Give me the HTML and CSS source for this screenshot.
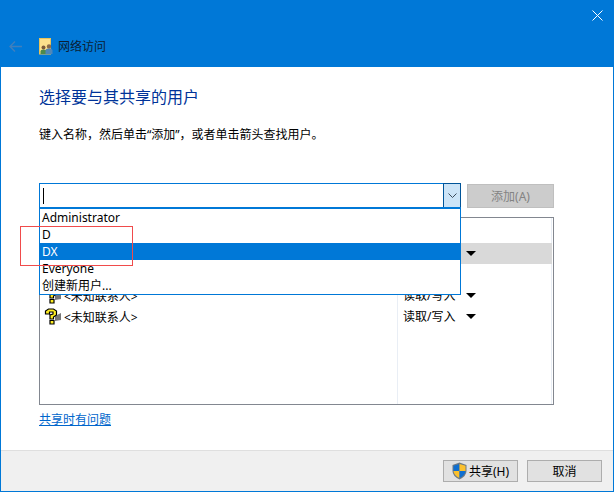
FILE: index.html
```html
<!DOCTYPE html>
<html lang="zh-CN">
<head>
<meta charset="utf-8">
<title>网络访问</title>
<link rel="stylesheet" href="styles.css">
</head>
<body>
<div class="window">
  <header class="titlebar">
    <div class="close-row">
      <svg class="close" width="11" height="11" viewBox="0 0 11 11"><path d="M.5.5l10 10M10.5.5l-10 10" stroke="#fff" stroke-width="1" fill="none"/></svg>
    </div>
    <div class="nav-row">
      <svg class="back" width="13" height="11" viewBox="0 0 13 11"><path d="M6 .5L1 5.500l5 5M1 5.500h12" stroke="#3f7fbd" stroke-width="1.4" fill="none"/></svg>
      <svg class="app-icon" width="14" height="17" viewBox="0 0 14 17">
        <rect x=".5" y=".5" width="11" height="15.500" fill="#fbe08c" stroke="#e8c35a"/>
        <circle cx="4.500" cy="9.500" r="2" fill="#7a5a3a"/>
        <path d="M1.500 16v-2.500q0-2 3-2t3 2V16z" fill="#4d8a4a"/>
        <circle cx="10" cy="8.500" r="2.200" fill="#8a6a4a"/>
        <path d="M6.500 16v-3.500q0-2 3.500-2t3.500 2V16z" fill="#4f86b8"/>
      </svg>
      <span class="app-title">网络访问</span>
    </div>
  </header>

  <main class="content">
    <h1 class="heading">选择要与其共享的用户</h1>
    <p class="desc">键入名称，然后单击“添加”，或者单击箭头查找用户。</p>

    <div class="add-row">
      <div class="combo">
        <div class="combo-input"><span class="caret"></span></div>
        <div class="combo-btn">
          <svg width="9" height="5" viewBox="0 0 9 5"><path d="M.5.5l4 4 4-4" stroke="#3c4c5c" fill="none"/></svg>
        </div>
        <ul class="dropdown">
          <li>Administrator</li>
          <li>D</li>
          <li class="selected">DX</li>
          <li>Everyone</li>
          <li>创建新用户...</li>
        </ul>
      </div>
      <button class="btn btn-add" disabled>添加(A)</button>
    </div>

    <div class="list">
      <div class="row"></div>
      <div class="row row-active">
        <span class="perm"><span class="arrow"></span></span>
      </div>
      <div class="row"></div>
      <div class="row">
        <svg class="q-icon" width="18" height="17" viewBox="0 0 18 17"><path d="M11 8l6-3v7l-6 1z" fill="#777"/><path d="M1.500 6V3l3-2h5l3 2v4l-3 2v2H6V7l3-1V4H5.500v2zM6 12.500h4v3.500H6z" fill="#ffee22" stroke="#000" stroke-width="1.200"/></svg>
        <span class="name">&lt;未知联系人&gt;</span>
        <span class="perm">读取/写入<span class="arrow"></span></span>
      </div>
      <div class="row">
        <svg class="q-icon" width="18" height="17" viewBox="0 0 18 17"><path d="M11 8l6-3v7l-6 1z" fill="#777"/><path d="M1.500 6V3l3-2h5l3 2v4l-3 2v2H6V7l3-1V4H5.500v2zM6 12.500h4v3.500H6z" fill="#ffee22" stroke="#000" stroke-width="1.200"/></svg>
        <span class="name">&lt;未知联系人&gt;</span>
        <span class="perm">读取/写入<span class="arrow"></span></span>
      </div>
    </div>

    <a class="help" href="#">共享时有问题</a>
  </main>

  <footer class="footer">
    <button class="btn btn-share">
      <svg width="15" height="18" viewBox="0 0 15 18">
        <path d="M7.500.5L14.500 3v6q0 5-7 8.500Q.5 14 .5 9V3z" fill="#6f7a84"/>
        <path d="M7.500 2L7.500 9H1.500V3.800z" fill="#0f6fd0"/>
        <path d="M7.500 2l6 1.800V9h-6z" fill="#fbc02d"/>
        <path d="M1.500 9h6v7q-5.500-2.500-6-7z" fill="#fbc02d"/>
        <path d="M7.500 9h6q-.5 4.500-6 7z" fill="#0f6fd0"/>
      </svg>
      <span>共享(H)</span>
    </button>
    <button class="btn">取消</button>
  </footer>

  <div class="annotation"></div>
</div>
</body>
</html>
```
FILE: styles.css
```css
* { box-sizing: border-box; }
html, body { margin: 0; padding: 0; }
body {
  font-family: "Noto Sans", "Noto Sans CJK SC", sans-serif;
  font-size: 12px;
  color: #000;
  background: #fff;
}
.window {
  position: relative;
  width: 614px;
  height: 492px;
  display: flex;
  flex-direction: column;
  border: 1px solid #0078d7;
  border-top: 0;
  overflow: hidden;
}
.titlebar {
  height: 67px;
  flex: none;
  margin: 0 -1px;
  background: #0078d7;
  display: flex;
  flex-direction: column;
}
.close-row {
  display: flex;
  justify-content: flex-end;
  padding: 10px 11px 0 0;
  height: 38px;
}
.close { display: block; }
.nav-row {
  display: flex;
  align-items: center;
  height: 17px;
  padding-left: 9px;
}
.back { margin-right: 17px; }
.app-icon { margin-right: 5px; }
.app-title { font-size: 12px; line-height: 17px; color: #0b1e33; }

.content {
  flex: 1;
  padding: 0 59px 0 38px;
  min-height: 0;
}
.heading {
  margin: 20px 0 0;
  font-size: 16px;
  font-weight: 400;
  line-height: 20px;
  color: #003399;
}
.desc {
  margin: 19px 0 0;
  font-size: 12px;
  line-height: 17px;
}
.add-row {
  margin-top: 40px;
  display: flex;
  height: 25px;
  gap: 6px;
}
.combo {
  position: relative;
  width: 422px;
  height: 25px;
  display: flex;
  border: 1px solid #0078d7;
}
.combo-input { flex: 1; position: relative; display: flex; align-items: center; padding-left: 3px; }
.caret { display: block; width: 1px; height: 16px; background: #000; }
.combo-btn {
  width: 18px;
  margin: -1px -1px -1px 0;
  background: #cce4f7;
  border: 1px solid #005499;
  display: flex;
  align-items: center;
  justify-content: center;
}
.dropdown {
  position: absolute;
  left: -1px;
  top: 23px;
  width: 422px;
  height: 88px;
  margin: 0;
  padding: 0;
  list-style: none;
  background: #fff;
  border: 1px solid #0078d7;
  border-top-width: 2px;
  z-index: 2;
}
.dropdown li {
  height: 17px;
  line-height: 17px;
  padding-left: 2px;
  font-size: 12px;
}
.dropdown .selected { background: #0078d7; color: #fff; }

.btn {
  width: 75px;
  height: 22px;
  padding: 0;
  font: inherit;
  color: #000;
  background: #e1e1e1;
  border: 1px solid #adadad;
  display: flex;
  align-items: center;
  justify-content: center;
}
.btn-add {
  width: 87px;
  height: 24px;
  margin-top: 1px;
  background: #cccccc;
  border-color: #bfbfbf;
  color: #838383;
}
.btn-share { gap: 2px; }

.list {
  margin-top: 9px;
  width: 515px;
  height: 188px;
  padding: 4px 1px 0 0;
  border: 1px solid #828790;
  background:
    linear-gradient(#e9eef5, #e9eef5) 357px 0 / 1px 100% no-repeat,
    linear-gradient(#e9eef5, #e9eef5) 511px 0 / 1px 100% no-repeat,
    #fff;
}
.row {
  position: relative;
  height: 21px;
  display: flex;
  align-items: center;
  padding-left: 4px;
}
.row-active { background: #d9d9d9; }
.q-icon { flex: none; margin-right: 2px; }
.name { font-size: 12px; }
.perm {
  position: absolute;
  left: 363px;
  top: 0;
  line-height: 21px;
  display: flex;
  align-items: center;
  height: 21px;
}
.arrow {
  position: absolute;
  left: 63px;
  top: 8px;
  width: 0;
  height: 0;
  border-left: 5px solid transparent;
  border-right: 5px solid transparent;
  border-top: 5px solid #000;
}
.help {
  display: inline-block;
  margin-top: 6px;
  font-size: 12px;
  line-height: 17px;
  color: #0066cc;
}
.footer {
  flex: none;
  height: 41px;
  background: #f0f0f0;
  border-top: 1px solid #dfdfdf;
  display: flex;
  justify-content: flex-end;
  align-items: flex-start;
  gap: 9px;
  padding: 9px 11px 0 0;
}
.annotation {
  position: absolute;
  left: 19px;
  top: 226px;
  width: 113px;
  height: 40px;
  border: 1px solid #f04b4b;
  z-index: 3;
}
```
